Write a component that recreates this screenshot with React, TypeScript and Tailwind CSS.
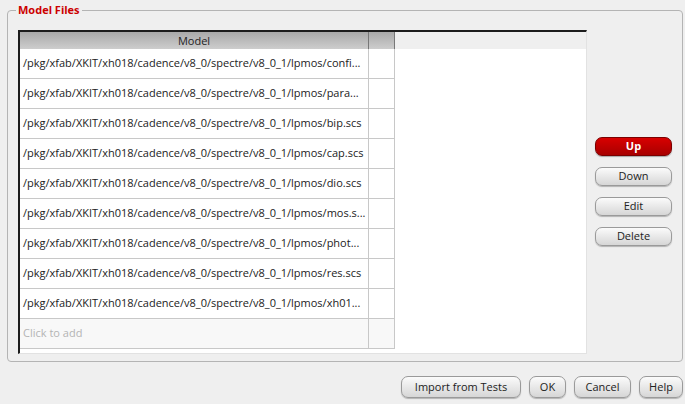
import React from "react";

const rows = [
  "/pkg/xfab/XKIT/xh018/cadence/v8_0/spectre/v8_0_1/lpmos/confi...",
  "/pkg/xfab/XKIT/xh018/cadence/v8_0/spectre/v8_0_1/lpmos/para...",
  "/pkg/xfab/XKIT/xh018/cadence/v8_0/spectre/v8_0_1/lpmos/bip.scs",
  "/pkg/xfab/XKIT/xh018/cadence/v8_0/spectre/v8_0_1/lpmos/cap.scs",
  "/pkg/xfab/XKIT/xh018/cadence/v8_0/spectre/v8_0_1/lpmos/dio.scs",
  "/pkg/xfab/XKIT/xh018/cadence/v8_0/spectre/v8_0_1/lpmos/mos.s...",
  "/pkg/xfab/XKIT/xh018/cadence/v8_0/spectre/v8_0_1/lpmos/phot...",
  "/pkg/xfab/XKIT/xh018/cadence/v8_0/spectre/v8_0_1/lpmos/res.scs",
  "/pkg/xfab/XKIT/xh018/cadence/v8_0/spectre/v8_0_1/lpmos/xh01...",
];

function Btn({ children, w, h = 19, primary = false }: { children: React.ReactNode; w: number; h?: number; primary?: boolean }) {
  return (
    <div
      className={
        primary
          ? "flex items-center justify-center rounded-[7px] border border-[#7a0000] bg-gradient-to-b from-[#d80000] to-[#a80000] text-white font-bold shadow-[0_1px_1px_rgba(0,0,0,0.3)]"
          : "flex items-center justify-center rounded-[7px] border border-[#9a9a9a] bg-gradient-to-b from-[#fbfbfb] to-[#d6d6d6] text-[#222] shadow-[0_1px_1px_rgba(0,0,0,0.25)]"
      }
      style={{ width: w, height: h }}
    >
      {children}
    </div>
  );
}

export default function App() {
  return (
    <div
      className="w-[685px] h-[404px] bg-[#efefef] flex flex-col text-[11px] text-[#222]"
      style={{ fontFamily: '"Open Sans", "Noto Sans", sans-serif' }}
    >
      <div className="ml-[7px] mr-[2px] mt-[10px] h-[352px] relative border border-[#b4b4b4] rounded-[4px] flex pl-[10px] pt-[19px]">
        <div className="absolute left-[8px] top-[-9px] px-[2px] bg-[#efefef] text-[#cc0000] font-bold leading-[16px]">
          Model Files
        </div>
        <div className="w-[569px] h-[324px] bg-white border-t-2 border-l-2 border-[#1c1c1c] border-r border-b border-r-[#e2e2e2] border-b-[#e2e2e2] flex flex-col">
          <div className="flex h-[17px] leading-[17px]">
            <div className="w-[349px] text-center bg-gradient-to-b from-[#a9a9a9] to-[#cdcdcd] border-r border-[#777]">Model</div>
            <div className="w-[26px] bg-gradient-to-b from-[#a9a9a9] to-[#cdcdcd] border-r border-[#777]"></div>
            <div className="flex-1 bg-[#efefef]"></div>
          </div>
          {rows.map((r) => (
            <div key={r} className="flex h-[30px]">
              <div className="w-[349px] border-r border-b border-[#c8c8c8] flex items-center pl-[3px] whitespace-nowrap overflow-hidden">
                {r}
              </div>
              <div className="w-[26px] border-r border-b border-[#c8c8c8]"></div>
            </div>
          ))}
          <div className="flex h-[30px]">
            <div className="w-[349px] border-r border-b border-[#c8c8c8] bg-[#f8f8f8] flex items-center pl-[3px] text-[#b4b4b4]">
              Click to add
            </div>
            <div className="w-[26px] border-r border-b border-[#c8c8c8] bg-[#f8f8f8]"></div>
          </div>
        </div>
        <div className="ml-[8px] pt-[107px] flex flex-col gap-[11px]">
          <Btn w={77} primary>Up</Btn>
          <Btn w={77}>Down</Btn>
          <Btn w={77}>Edit</Btn>
          <Btn w={77}>Delete</Btn>
        </div>
      </div>
      <div className="flex justify-end gap-[8px] mt-[14px] pr-[2px]">
        <Btn w={120} h={22}>Import from Tests</Btn>
        <Btn w={37} h={22}>OK</Btn>
        <Btn w={57} h={22}>Cancel</Btn>
        <Btn w={44} h={22}>Help</Btn>
      </div>
    </div>
  );
}
